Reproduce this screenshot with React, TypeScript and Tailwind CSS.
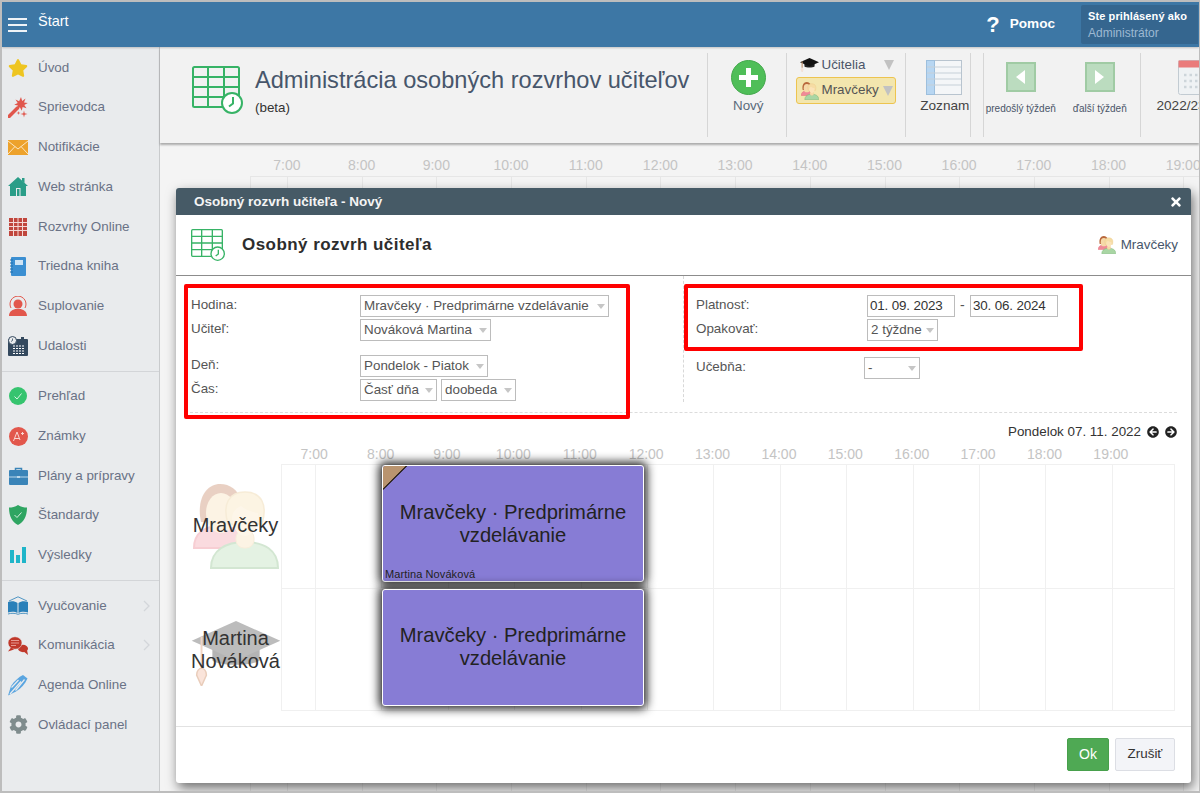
import React from "react";
import { FaStar, FaCog, FaTimes, FaArrowCircleLeft, FaArrowCircleRight } from "react-icons/fa";

const TableIcon = ({ w, h }: { w: number; h: number }) => (
  <svg width={w} height={h} viewBox="0 0 51 48" className="shrink-0">
    <g fill="none" stroke="#37b366" strokeWidth="2">
      <rect x="1" y="1" width="46" height="40" rx="1.5" />
      <path d="M1 11h46M1 21h46M1 31h46" />
      <path d="M16 1v40M32 1v40" />
    </g>
    <circle cx="40" cy="37" r="10" fill="#fff" stroke="#37b366" strokeWidth="2" />
    <path d="M41 31v6.500l-4 3" fill="none" stroke="#37b366" strokeWidth="2" />
  </svg>
);

const People = ({ w, h, soft }: { w: number; h: number; soft?: boolean }) => (
  <svg width={w} height={h} viewBox="0 0 86 85" className={soft ? "shrink-0 opacity-30" : "shrink-0"}>
    <path d="M8 38C3 14 14 0 27 0c10 0 18 6 21 16L40 40z" fill="#b9683c" />
    <path d="M1 64c0-16 12-22 26-22s25 6 25 22z" fill="#ef8a98" stroke="#e5606f" strokeWidth="2" />
    <ellipse cx="28" cy="29" rx="15" ry="20" fill="#f6d9a8" />
    <path d="M18 84c0-18 15-26 34-26s33 8 33 26z" fill="#a9d6a4" stroke="#6fb06c" strokeWidth="2" />
    <rect x="43" y="46" width="18" height="18" rx="8" fill="#f7d9a7" stroke="#e9c48a" />
    <path d="M35 40C29 20 36 8 52 8s23 12 17 32z" fill="#f6dca4" stroke="#e6c27e" strokeWidth="1.500" />
    <path d="M39 34c0-6 4-10 9-12 6 5 12 6 17 7 1 14-6 23-13 23s-13-9-13-18z" fill="#fbe3b8" />
  </svg>
);

const Cap = ({ w, h, soft }: { w: number; h: number; soft?: boolean }) => (
  <svg width={w} height={h} viewBox="0 0 90 66" className="shrink-0">
    <path d="M21 22h48v18c-8 6-40 6-48 0z" fill={soft ? "#b4b4b4" : "#222"} />
    <path d="M0 20 45 0l45 20-45 20z" fill={soft ? "#bcbcbc" : "#111"} />
    <path d="M10 16v30" stroke={soft ? "#f0d5c5" : "#b98a63"} strokeWidth={soft ? 2 : 5} />
    <path d="M10 66 5 55c0-5 3-7 5-7s5 2 5 7z" fill="#fae4da" stroke="#e9cdbb" strokeWidth="1.500" />
  </svg>
);

const Wand = () => (
  <svg width="20" height="21" viewBox="0 0 20 21">
    <path d="M1 19.500 9.500 11" stroke="#e0564c" strokeWidth="3.500" strokeLinecap="round" />
    <path d="M13 0l1.200 4 3.300-2.500-1.500 3.900 3.800.6-3.500 1.900 2.200 3.300-3.900-1.300-.8 3.800-1.900-3.500-3.300 2.200 1.300-3.800-3.700-.9 3.500-1.700L7.500 2.500l3.600 1.700z" fill="#e0564c" />
    <path d="M16 13.500l.7 2.800 2.800.7-2.800.7-.7 2.800-.7-2.800-2.800-.7 2.800-.7zM10.500 14l.4 1.600 1.600.4-1.600.4-.4 1.600-.4-1.600-1.600-.4 1.600-.4z" fill="#e0564c" />
  </svg>
);
const Mail = () => (
  <svg width="20" height="15" viewBox="0 0 20 15">
    <rect width="20" height="15" fill="#eda22c" />
    <path d="M0 1 10 9l10-8M0 14l7-7.500M20 14l-7-7.500" stroke="#fbe6c2" strokeWidth="1" fill="none" />
  </svg>
);
const Home = () => (
  <svg width="20" height="19" viewBox="0 0 20 19">
    <path d="M10 0 20 9h-2v10H2V9H0z" fill="#2a9d88" />
    <path d="M14 1h2.500v5L14 4z" fill="#2a9d88" />
    <rect x="8" y="11" width="4.500" height="8" fill="#e9ebed" />
    <rect x="9" y="12" width="2.500" height="7" fill="#2a9d88" />
  </svg>
);
const RedGrid = () => (
  <svg width="18" height="18" viewBox="0 0 18 18">
    <rect width="18" height="18" fill="#c0463d" />
    <path d="M0 4.500h18M0 8.500h18M0 12.500h18M4.500 0v18M9 0v18M13.500 0v18" stroke="#f3d9d6" strokeWidth="1" />
  </svg>
);
const Notebook = () => (
  <svg width="16" height="19" viewBox="0 0 16 19">
    <rect x="1" width="15" height="19" rx="1" fill="#3b8fd2" />
    <rect x="5" y="3" width="8" height="5" fill="#cfe4f5" />
    <path d="M0 3h3M0 6h3M0 9h3M0 12h3M0 15h3" stroke="#1f6fae" strokeWidth="1" />
  </svg>
);
const Supl = () => (
  <svg width="20" height="20" viewBox="0 0 20 20">
    <path d="M3 12A8 8 0 1 1 17 12" fill="none" stroke="#e2574c" strokeWidth="1" />
    <circle cx="10" cy="8" r="4.500" fill="#e2574c" />
    <path d="M1 20c0-5 4-6 6-7h6c2 1 6 2 6 7z" fill="#e2574c" />
  </svg>
);
const Cal = () => (
  <svg width="20" height="20" viewBox="0 0 20 20">
    <rect y="3" width="20" height="17" rx="1" fill="#34495e" />
    <rect x="13" y="1" width="3" height="4" fill="#34495e" />
    <path d="M5 10h12M5 12.500h12M5 15h12M5 17.500h12" stroke="#fff" strokeWidth="1.200" strokeDasharray="2 1" />
    <circle cx="4.500" cy="4.500" r="4" fill="#e9ebed" stroke="#34495e" strokeWidth="1" />
    <path d="M4.500 2.500v2l-1.500 1" stroke="#34495e" strokeWidth="0.800" fill="none" />
  </svg>
);
const Check = () => (
  <svg width="18" height="18" viewBox="0 0 18 18">
    <circle cx="9" cy="9" r="9" fill="#36c46f" />
    <path d="M5.500 9.500 8 12l4.500-5.500" stroke="#d8f5e3" strokeWidth="1" fill="none" />
  </svg>
);
const APlus = () => (
  <svg width="19" height="19" viewBox="0 0 19 19">
    <circle cx="9.500" cy="9.500" r="9.500" fill="#e2574c" />
    <path d="M4.500 14 8 5l3 8M5.500 11.500H10M12 6.500h3M13.500 5v3" stroke="#f9d6d2" strokeWidth="1" fill="none" />
  </svg>
);
const Case = () => (
  <svg width="19" height="18" viewBox="0 0 19 18">
    <path d="M6.500 4V1.500h6V4" fill="none" stroke="#3a84b8" strokeWidth="1.500" />
    <rect y="3" width="19" height="15" rx="1" fill="#3a84b8" />
    <path d="M0 10h19" stroke="#bcd8ea" strokeWidth="1" />
    <rect x="8" y="9" width="3" height="2" fill="#bcd8ea" />
  </svg>
);
const Shield = () => (
  <svg width="18" height="20" viewBox="0 0 18 20">
    <path d="M9 0c3 2 6 2.500 9 2.500C18 11 15 17 9 20 3 17 0 11 0 2.500 3 2.500 6 2 9 0z" fill="#2fa562" />
    <path d="M5.500 10 8 12.500l4.500-5" stroke="#d5efdf" strokeWidth="1" fill="none" />
  </svg>
);
const Bars = () => (
  <svg width="16" height="16" viewBox="0 0 16 16">
    <rect y="3" width="4" height="13" fill="#1fb5c9" />
    <rect x="6" y="8" width="4" height="8" fill="#1fb5c9" />
    <rect x="12" width="4" height="16" fill="#1fb5c9" />
  </svg>
);
const OpenBook = () => (
  <svg width="20" height="19" viewBox="0 0 20 19">
    <path d="M1 5 10 .8 19 5" fill="none" stroke="#2a80b9" strokeWidth="0.800" />
    <path d="M0 6c3-1 7-1 9.500 1v10C7 15.500 3 15.500 0 16.500zM20 6c-3-1-7-1-9.500 1v10c2.500-1.500 6.500-1.500 9.500-.5z" fill="#2a80b9" />
    <path d="M0 18c3-1 7-1 10 .3 3-1.300 7-1.300 10-.3" fill="none" stroke="#2a80b9" strokeWidth="0.800" />
  </svg>
);
const Chat = () => (
  <svg width="20" height="20" viewBox="0 0 20 20">
    <ellipse cx="15" cy="13.500" rx="5" ry="3.700" fill="#c0392b" />
    <path d="M15 16l5 4-1-5z" fill="#c0392b" />
    <ellipse cx="7" cy="8" rx="7" ry="6.300" fill="#c0392b" stroke="#e9ebed" strokeWidth="0.600" />
    <path d="M3 12.500 0 16.500l6-2z" fill="#c0392b" />
    <path d="M3 5.500h8M3 8h8M3 10.500h5" stroke="#e69a91" strokeWidth="1" />
  </svg>
);
const Feather = () => (
  <svg width="20" height="21" viewBox="0 0 20 21">
    <path d="M0 20.500 3 11C6 6 11 2 15 0l4.500 3.500C17 9 13 13.500 8 16.500z" fill="#5aa5e0" />
    <path d="M2 19 13 6.500M7.500 15.500 16.500 4.500M3.500 12.500 10.500 5" stroke="#e9ebed" strokeWidth="1.200" fill="none" />
  </svg>
);

type Item = { t: string; i: React.ReactNode; chev?: boolean };
const g1: Item[] = [
  { t: "Úvod", i: <FaStar size={20} color="#eec521" /> },
  { t: "Sprievodca", i: <Wand /> },
  { t: "Notifikácie", i: <Mail /> },
  { t: "Web stránka", i: <Home /> },
  { t: "Rozvrhy Online", i: <RedGrid /> },
  { t: "Triedna kniha", i: <Notebook /> },
  { t: "Suplovanie", i: <Supl /> },
  { t: "Udalosti", i: <Cal /> },
];
const g2: Item[] = [
  { t: "Prehľad", i: <Check /> },
  { t: "Známky", i: <APlus /> },
  { t: "Plány a prípravy", i: <Case /> },
  { t: "Štandardy", i: <Shield /> },
  { t: "Výsledky", i: <Bars /> },
];
const g3: Item[] = [
  { t: "Vyučovanie", i: <OpenBook />, chev: true },
  { t: "Komunikácia", i: <Chat />, chev: true },
  { t: "Agenda Online", i: <Feather /> },
  { t: "Ovládací panel", i: <FaCog size={19} color="#7f8c8d" /> },
];

const Row = ({ t, i, chev }: Item) => (
  <div className="flex h-[39.700px] items-center pl-[6px] text-[13.400px] text-[#6a7286]">
    <span className="flex w-[20px] shrink-0 justify-center">{i}</span>
    <span className="ml-[10px] flex-1">{t}</span>
    {chev && (
      <svg width="8" height="12" viewBox="0 0 8 12" className="mr-[8px]">
        <path d="M1 1l5 5-5 5" fill="none" stroke="#d3d6da" strokeWidth="1.300" />
      </svg>
    )}
  </div>
);

const Sidebar = () => (
  <aside className="w-[158px] shrink-0 border-r border-[#c9cbcd] bg-[#e9ebed] pt-px">
    {g1.map((x) => <Row key={x.t} {...x} />)}
    <div className="my-[5px] h-px bg-[#d3d5d8]" />
    {g2.map((x) => <Row key={x.t} {...x} />)}
    <div className="my-[5px] h-px bg-[#d3d5d8]" />
    {g3.map((x) => <Row key={x.t} {...x} />)}
  </aside>
);

const Select = ({ t, w }: { t: string; w: number }) => (
  <span className="flex h-[22px] items-center justify-between border border-[#bcbcbc] bg-white pl-[3px] pr-[3px] text-[13.400px] text-[#555]" style={{ width: w }}>
    <span className="whitespace-nowrap">{t}</span>
    <span className="ml-[3px] h-0 w-0 shrink-0 border-x-[4.500px] border-t-[5px] border-x-transparent border-t-[#c6c6c6]" />
  </span>
);

const DateBox = ({ t }: { t: string }) => (
  <span className="flex h-[22px] w-[88px] items-center border border-[#bcbcbc] pl-[2px] text-[13.400px] tracking-[-0.150px] text-[#333]">{t}</span>
);

const Label = ({ t, w }: { t: string; w: string }) => <span className={`${w} shrink-0 text-[13.400px] leading-[20px] text-[#555]`}>{t}</span>;

const Sep = () => <div className="my-[6px] w-px self-stretch bg-[#d6d6d6]" />;

const Toolbar = () => (
  <div className="relative z-10 flex h-[96px] shrink-0 bg-[#f2f2f2] shadow-[0_2px_2px_rgba(0,0,0,0.3)]">
    <div className="flex w-[547px] shrink-0 pl-[32px] pt-[19px]">
      <TableIcon w={51} h={48} />
      <div className="ml-[12px]">
        <div className="text-[23.600px] leading-[28px] text-[#47566b]">Administrácia osobných rozvrhov učiteľov</div>
        <div className="mt-[6px] text-[13.400px] leading-[16px] text-[#333]">(beta)</div>
      </div>
    </div>
    <Sep />
    <div className="flex w-[78px] shrink-0 flex-col items-center pl-[3px] pt-[13px]">
      <svg width="35" height="35" viewBox="0 0 35 35">
        <circle cx="17.500" cy="17.500" r="17" fill="#4fbe58" stroke="#43a84c" />
        <path d="M17.500 8v19M8 17.500h19" stroke="#fff" strokeWidth="5" />
      </svg>
      <span className="mt-[1px] text-[13.400px] leading-[20px] text-[#5a6a7a]">Nový</span>
    </div>
    <Sep />
    <div className="w-[118px] shrink-0 pl-[9px] pt-[9px]">
      <div className="flex h-[18px] items-center pl-[4px] text-[13.400px] text-[#4a5568]">
        <Cap w={19} h={14} />
        <span className="ml-[3px]">Učitelia</span>
        <span className="ml-[19px] h-0 w-0 border-x-[5.500px] border-t-[10px] border-x-transparent border-t-[#c2c2c2]" />
      </div>
      <div className="mt-[3px] flex h-[27px] w-[100px] items-center rounded-[3px] border border-[#edc44f] bg-[#f3e6ae] pl-[4px] text-[13.400px] text-[#555]">
        <People w={18} h={18} />
        <span className="ml-[3px]">Mravčeky</span>
        <span className="ml-[4px] h-0 w-0 border-x-[5.500px] border-t-[10px] border-x-transparent border-t-[#c2c2c2]" />
      </div>
    </div>
    <Sep />
    <div className="flex w-[65px] shrink-0 flex-col pl-[15px] pt-[13px]">
      <svg width="36" height="35" viewBox="0 0 36 35" className="ml-[6px]">
        <rect x="0.500" y="0.500" width="35" height="34" fill="#f4f6f8" stroke="#b8c4cf" />
        <rect x="0.500" y="0.500" width="8" height="34" fill="#b7d6f2" stroke="#9dbfdd" />
        <path d="M1 7h34M1 13h34M1 19h34M1 25h34" stroke="#c6d0d8" strokeWidth="1" />
      </svg>
      <span className="mt-[1px] whitespace-nowrap text-[13.600px] leading-[20px] text-[#444]">Zoznam</span>
    </div>
    <Sep />
    <div className="w-[12px] shrink-0" />
    <Sep />
    <div className="flex w-[156px] shrink-0 pl-[1px] pt-[15px] text-[10px] text-[#4a5568]">
      <div className="flex w-[72px] flex-col items-center">
        <span className="flex h-[30px] w-[30px] items-center justify-center border-2 border-[#a0cba4] bg-[#bbdcbf]">
          <span className="h-0 w-0 border-y-[7px] border-r-[9px] border-y-transparent border-r-white" />
        </span>
        <span className="mt-[10px] whitespace-nowrap leading-[14px]">predošlý týždeň</span>
      </div>
      <div className="ml-[15px] flex w-[56px] flex-col items-center">
        <span className="flex h-[30px] w-[30px] items-center justify-center border-2 border-[#a0cba4] bg-[#bbdcbf]">
          <span className="h-0 w-0 border-y-[7px] border-l-[9px] border-y-transparent border-l-white" />
        </span>
        <span className="mt-[10px] whitespace-nowrap leading-[14px]">ďalší týždeň</span>
      </div>
    </div>
    <Sep />
    <div className="flex flex-col overflow-hidden pl-[16px] pt-[13px]">
      <svg width="36" height="35" viewBox="0 0 36 35" className="ml-[21px] shrink-0">
        <rect x="0.500" y="0.500" width="35" height="34" rx="2" fill="#eff2f4" stroke="#c2cbd2" />
        <rect x="0.500" y="0.500" width="35" height="7" fill="#ea7b7b" />
        <path d="M6 15h24M6 21h24M6 27h24" stroke="#cdd5da" strokeWidth="2.500" strokeDasharray="2.500 3" />
      </svg>
      <span className="mt-[1px] whitespace-nowrap text-[13.600px] leading-[20px] text-[#444]">2022/23</span>
    </div>
  </div>
);

const hours = ["7:00", "8:00", "9:00", "10:00", "11:00", "12:00", "13:00", "14:00", "15:00", "16:00", "17:00", "18:00", "19:00"];

const Background = () => (
  <div className="flex-1 overflow-hidden bg-[#f4f4f4]">
    <div className="flex h-[33px] items-end pl-[89.600px]">
      {hours.map((h) => (
        <span key={h} className="w-[74.700px] shrink-0 text-center text-[14px] text-[#c4c4c4]">{h}</span>
      ))}
    </div>
    <div className="ml-[90px] flex h-[620px] border-t border-[#e6e6e6]">
      <div className="w-[37px] shrink-0 border-l border-[#e6e6e6]" />
      {hours.map((h) => (
        <div key={h} className="w-[74.700px] shrink-0 border-l border-[#e6e6e6]" />
      ))}
    </div>
  </div>
);

const TimelineRow = ({ showName, last, label }: { showName?: boolean; last?: boolean; label: React.ReactNode }) => (
  <div className="flex h-[123.500px]">
    <div className="relative w-[91px] shrink-0">{label}</div>
    <div className={`relative flex flex-1 border-t border-[#f0f0f0] ${last ? "border-b" : ""}`}>
      <div className="w-[34px] shrink-0 border-l border-[#f0f0f0]" />
      {hours.slice(0, 12).map((h) => (
        <div key={h} className="w-[66.400px] shrink-0 border-l border-[#f0f0f0]" />
      ))}
      <div className="flex-1 border-x border-[#f0f0f0]" />
      <div className="absolute left-[101px] top-0 flex h-[117px] w-[262px] flex-col items-center justify-center overflow-hidden rounded-[3px] border border-white bg-[#877cd5] text-center text-[20.200px] leading-[23px] text-[#222] shadow-[0_0_10px_3px_rgba(0,0,0,0.85)]">
        {showName && (
          <>
            <span className="absolute left-0 top-0 h-0 w-0 border-r-[24px] border-t-[24px] border-r-transparent border-t-[#b9946f]" />
            <span className="absolute left-[-5px] top-[11px] h-px w-[34px] -rotate-45 bg-black" />
            <span className="absolute bottom-0 left-[2px] text-[11px] leading-[13px] tracking-[0.100px]">Martina Nováková</span>
          </>
        )}
        <span className="w-[240px]">Mravčeky · Predprimárne vzdelávanie</span>
      </div>
    </div>
  </div>
);

const Modal = () => (
  <div className="absolute left-[174px] top-[186px] z-20 flex h-[595px] w-[1015px] flex-col rounded-[3px] bg-white shadow-[2px_5px_12px_rgba(0,0,0,0.55)]">
    <div className="flex h-[27px] shrink-0 items-center justify-between rounded-t-[3px] bg-[#465a66] pl-[18px] pr-[8px] pt-px text-[13.500px] font-bold text-[#f4f4f4]">
      <span>Osobný rozvrh učiteľa - Nový</span>
      <FaTimes size={14} color="#fff" />
    </div>
    <div className="flex h-[61px] shrink-0 items-center justify-between border-b border-[#8c8c8c] pl-[15px] pr-[13px]">
      <div className="flex items-center">
        <TableIcon w={34} h={32} />
        <span className="ml-[17px] text-[17px] font-bold tracking-[0.450px] text-[#2d2d2d]">Osobný rozvrh učiteľa</span>
      </div>
      <div className="flex items-center text-[13.400px] text-[#47566b]">
        <People w={18} h={18} />
        <span className="ml-[5px]">Mravčeky</span>
      </div>
    </div>

    <div className="mx-[14px] flex h-[137px] shrink-0 border-b border-dashed border-[#dcdcdc]">
      <div className="w-[493px] shrink-0 pl-px pt-[19px]">
        <div className="flex items-start"><Label t="Hodina:" w="w-[169px]" /><Select t="Mravčeky · Predprimárne vzdelávanie" w={249} /></div>
        <div className="mt-[2px] flex items-start"><Label t="Učiteľ:" w="w-[169px]" /><Select t="Nováková Martina" w={131} /></div>
        <div className="mt-[14px] flex items-start"><Label t="Deň:" w="w-[169px]" /><Select t="Pondelok - Piatok" w={128} /></div>
        <div className="mt-[2px] flex items-start">
          <Label t="Čas:" w="w-[169px]" />
          <Select t="Časť dňa" w={77} />
          <span className="ml-[4px]"><Select t="doobeda" w={75} /></span>
        </div>
      </div>
      <div className="mb-[10px] flex-1 border-l border-dashed border-[#d8d8d8] pl-[12px] pt-[19px]">
        <div className="flex items-start">
          <Label t="Platnosť:" w="w-[171px]" />
          <DateBox t="01. 09. 2023" />
          <span className="mx-[5px] w-[5px] text-[14px] text-[#555]">-</span>
          <DateBox t="30. 06. 2024" />
        </div>
        <div className="mt-[2px] flex items-start"><Label t="Opakovať:" w="w-[171px]" /><Select t="2 týždne" w={71} /></div>
        <div className="mt-[16px] flex items-start">
          <Label t="Učebňa:" w="w-[168px]" />
          <Select t="-" w={56} />
        </div>
      </div>
    </div>

    <div className="mr-[14px] flex h-[32px] shrink-0 items-center justify-end pt-[6px] text-[13.400px] text-[#333]">
      <span>Pondelok 07. 11. 2022</span>
      <FaArrowCircleLeft size={12} color="#222" className="ml-[6px]" />
      <FaArrowCircleRight size={12} color="#222" className="ml-[6px]" />
    </div>
    <div className="ml-[105px] flex h-[19px] shrink-0 items-center">
      {hours.map((h) => (
        <span key={h} className="w-[66.400px] shrink-0 text-center text-[14px] text-[#c4c4c4]">{h}</span>
      ))}
    </div>
    <div className="ml-[14px] mr-[16px] shrink-0">
      <TimelineRow
        showName
        label={
          <>
            <span className="absolute left-[3px] top-[20px]"><People w={86} h={85} soft /></span>
            <span className="absolute inset-x-0 top-[50px] text-center text-[20px] leading-[23px] text-[#333]">Mravčeky</span>
          </>
        }
      />
      <TimelineRow
        last
        label={
          <>
            <span className="absolute left-px top-[33px]"><Cap w={90} h={65} soft /></span>
            <span className="absolute inset-x-[-5px] top-[39px] text-center text-[20px] leading-[23px] text-[#333]">Martina Nováková</span>
          </>
        }
      />
    </div>
    <div className="mt-[15px] flex flex-1 items-start justify-end border-t border-[#e2e2e2] pr-[16px] pt-[11px]">
      <button className="flex h-[33px] w-[42px] items-center justify-center rounded-[2px] border border-[#48a04c] bg-[#4fa954] text-[14px] text-white">Ok</button>
      <button className="ml-[6px] flex h-[33px] w-[60px] items-center justify-center rounded-[2px] border border-[#dcdee4] bg-[#f3f4f8] text-[13.400px] text-[#333]">Zrušiť</button>
    </div>
  </div>
);

export default function App() {
  return (
    <div className="relative flex h-[793px] w-[1200px] flex-col overflow-hidden border-y-2 border-l-2 border-r border-[#bdbdbd] font-['Liberation_Sans',Arial,sans-serif]">
      <header className="relative z-30 flex h-[45px] shrink-0 items-center bg-[#3d77a5] text-white shadow-[0_1px_2px_rgba(0,0,0,0.2)]">
        <svg width="19" height="14" viewBox="0 0 19 14" className="ml-[6px]">
          <path d="M0 1h19M0 7h19M0 13h19" stroke="#eef3f7" strokeWidth="1.800" />
        </svg>
        <span className="ml-[11px] flex-1 pb-[6px] text-[14.500px]">Štart</span>
        <span className="text-[22px] font-bold leading-none">?</span>
        <span className="ml-[10px] mr-[26px] text-[13.600px] font-bold">Pomoc</span>
        <div className="mr-px flex h-[39px] w-[117px] flex-col justify-center self-center rounded-l-[2px] bg-[#35668f] pl-[7px]">
          <span className="text-[11px] font-bold leading-[15px] tracking-[0.100px]">Ste prihlásený ako</span>
          <span className="mt-[2px] pb-px text-[12px] leading-[14px] text-[#9db9d2]">Administrátor</span>
        </div>
      </header>
      <div className="flex min-h-0 flex-1">
        <Sidebar />
        <main className="flex min-w-0 flex-1 flex-col">
          <Toolbar />
          <Background />
        </main>
      </div>
      <Modal />
      <div className="pointer-events-none absolute left-[182px] top-[282px] z-40 h-[135px] w-[446px] rounded-[2px] border-[4px] border-[#ff0000]" />
      <div className="pointer-events-none absolute left-[682px] top-[282px] z-40 h-[67px] w-[399px] rounded-[2px] border-[4px] border-[#ff0000]" />
    </div>
  );
}
